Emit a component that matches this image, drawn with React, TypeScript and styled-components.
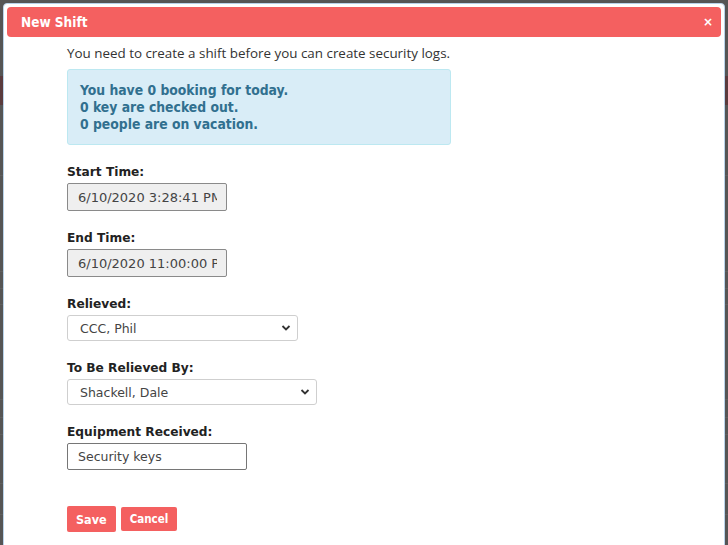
import React from 'react';
import styled, { createGlobalStyle } from 'styled-components';

const Global = createGlobalStyle`
  html, body {
    margin: 0;
    padding: 0;
    height: 100%;
    overflow: hidden;
  }
  body {
    font-family: 'DejaVu Sans', Verdana, sans-serif;
  }
`;

const Page = styled.div`
  position: relative;
  width: 728px;
  height: 545px;
  background: #555;
  overflow: hidden;
`;

const PageBar = styled.div`
  margin-top: 76px;
  height: 29px;
  background: #5a3b3d;
`;

const PageRow = styled.div<{ gap: number }>`
  margin-top: ${p => p.gap}px;
  height: 1px;
  background: #5f5f5f;
`;

const Dialog = styled.div`
  position: absolute;
  left: 3px;
  top: 3px;
  width: 714px;
  height: 560px;
  padding: 3px;
  background: #fff;
  border: 1px solid #b9d3ea;
  border-radius: 4px;
`;

const TitleBar = styled.div`
  display: flex;
  align-items: center;
  justify-content: space-between;
  height: 30px;
  padding: 0 8px 0 14px;
  background: #f46060;
  border-radius: 4px;
  color: #fff;
  font-family: 'DejaVu Sans Condensed', 'DejaVu Sans', sans-serif;
  font-weight: bold;
  font-size: 13.5px;
`;

const Close = styled.span`
  font-family: 'DejaVu Sans', sans-serif;
  font-size: 12px;
  font-weight: bold;
  line-height: 1;
`;

const Body = styled.div`
  padding: 7px 0 0 60px;
  color: #333;
`;

const Intro = styled.p`
  margin: 0 0 6px;
  font-family: 'Open Sans', sans-serif;
  font-size: 13.4px;
  line-height: 19px;
  color: #333;
`;

const Info = styled.div`
  width: 358px;
  padding: 12px 12px 11px 12px;
  background: #d9edf7;
  border: 1px solid #bce8f1;
  border-radius: 3px;
  color: #31708f;
  font-family: 'DejaVu Sans Condensed', 'Liberation Sans', sans-serif;
  font-weight: bold;
  font-size: 13.8px;
  line-height: 17px;
`;

const Field = styled.div`
  margin-top: 20px;
  display: flex;
  flex-direction: column;
  align-items: flex-start;
`;

const Label = styled.label`
  font-family: 'DejaVu Sans', Verdana, sans-serif;
  font-weight: bold;
  font-size: 12.2px;
  line-height: 15px;
  color: #222;
  margin-bottom: 3px;
`;

const TextBox = styled.input<{ w: number; h: number; readonlyLook?: boolean }>`
  box-sizing: border-box;
  width: ${p => p.w}px;
  height: ${p => p.h}px;
  padding: 0 9px 0 10px;
  border: 1px solid ${p => (p.readonlyLook ? '#8a8a8a' : '#767676')};
  border-radius: 2px;
  background: ${p => (p.readonlyLook ? '#efefef' : '#fff')};
  font-family: 'DejaVu Sans', Verdana, sans-serif;
  font-size: ${p => (p.readonlyLook ? 13 : 12.5)}px;
  color: #444;
  outline: none;
`;

const SelectWrap = styled.div<{ w: number }>`
  position: relative;
  box-sizing: border-box;
  width: ${p => p.w}px;
  height: 26px;
  border: 1px solid #cfcfcf;
  border-radius: 3px;
  background: #fff;
  display: flex;
  align-items: center;
  padding-left: 12px;
  font-family: 'DejaVu Sans', Verdana, sans-serif;
  font-size: 12.5px;
  color: #444;
`;

const Chevron = styled.svg`
  position: absolute;
  right: 6px;
  top: 8px;
`;

const Actions = styled.div`
  margin-top: 36px;
  display: flex;
  align-items: center;
  gap: 5px;
`;

const Button = styled.button<{ small?: boolean }>`
  height: ${p => (p.small ? 24 : 26)}px;
  padding: 0 9px;
  border: none;
  border-radius: 2px;
  background: #f46060;
  color: #fff;
  font-family: 'DejaVu Sans Condensed', 'DejaVu Sans', sans-serif;
  font-weight: bold;
  font-size: ${p => (p.small ? 11.5 : 12.5)}px;
`;

const Select: React.FC<{ w: number; value: string }> = ({ w, value }) => (
  <SelectWrap w={w}>
    {value}
    <Chevron width="10" height="8" viewBox="0 0 10 8">
      <path d="M1.5 2 L5 5.5 L8.5 2" fill="none" stroke="#333" strokeWidth="1.8" />
    </Chevron>
  </SelectWrap>
);

export default function App() {
  return (
    <Page>
      <Global />
      <PageBar />
      <PageRow gap={70} />
      <PageRow gap={95} />
      <PageRow gap={16} />
      <PageRow gap={15} />
      <PageRow gap={94} />
      <PageRow gap={17} />
      <PageRow gap={16} />
      <PageRow gap={48} />
      <PageRow gap={30} />
      <Dialog>
        <TitleBar>
          <span>New Shift</span>
          <Close>×</Close>
        </TitleBar>
        <Body>
          <Intro>You need to create a shift before you can create security logs.</Intro>
          <Info>
            You have 0 booking for today.
            <br />0 key are checked out.
            <br />0 people are on vacation.
          </Info>
          <Field>
            <Label>Start Time:</Label>
            <TextBox w={160} h={28} readonlyLook readOnly value="6/10/2020 3:28:41 PM" />
          </Field>
          <Field>
            <Label>End Time:</Label>
            <TextBox w={160} h={28} readonlyLook readOnly value="6/10/2020 11:00:00 PM" />
          </Field>
          <Field>
            <Label>Relieved:</Label>
            <Select w={231} value="CCC, Phil" />
          </Field>
          <Field>
            <Label>To Be Relieved By:</Label>
            <Select w={250} value="Shackell, Dale" />
          </Field>
          <Field>
            <Label>Equipment Received:</Label>
            <TextBox w={180} h={27} readOnly value="Security keys" />
          </Field>
          <Actions>
            <Button>Save</Button>
            <Button small>Cancel</Button>
          </Actions>
        </Body>
      </Dialog>
    </Page>
  );
}
